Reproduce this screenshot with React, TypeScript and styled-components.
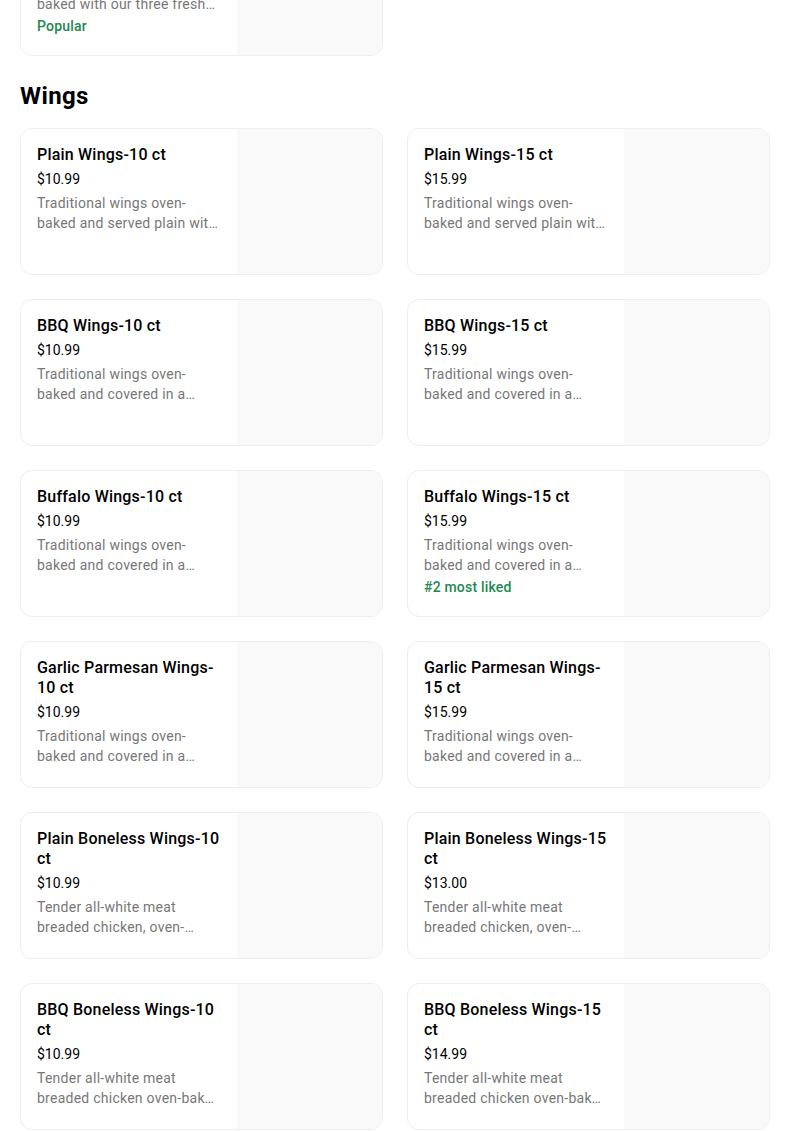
import React from "react";
import styled, { createGlobalStyle } from "styled-components";

interface MenuItem {
  name: string;
  price: string;
  description: string;
  tag?: string;
}

const GlobalStyle = createGlobalStyle`
  * {
    box-sizing: border-box;
  }
  body {
    margin: 0;
    background: #ffffff;
    color: #000000;
    font-family: Roboto, "Noto Sans", "Liberation Sans", sans-serif;
    -webkit-font-smoothing: antialiased;
  }
`;

const Page = styled.main`
  width: 750px;
  margin: -91px 0 0 20px;
`;

const Section = styled.section`
  display: flex;
  flex-direction: column;
`;

const SectionTitle = styled.h2`
  margin: 24px 0 16px;
  font-size: 24px;
  line-height: 32px;
  font-weight: 700;
  letter-spacing: 0.4px;
`;

const ItemGrid = styled.ul`
  list-style: none;
  margin: 0;
  padding: 0;
  display: grid;
  grid-template-columns: 1fr 1fr;
  gap: 24px;
`;

const Card = styled.li`
  display: flex;
  height: 147px;
  border: 1px solid #eeeeee;
  border-radius: 12px;
  overflow: hidden;
  background: #ffffff;
  cursor: pointer;
`;

const Info = styled.div`
  flex: 1;
  min-width: 0;
  padding: 16px 16px 15px;
  display: flex;
  flex-direction: column;
`;

const Name = styled.div`
  font-size: 16px;
  line-height: 20px;
  font-weight: 500;
  letter-spacing: 0.2px;
  color: #000000;
`;

const Price = styled.div`
  margin-top: 4px;
  font-size: 14px;
  line-height: 20px;
  color: #000000;
`;

const Description = styled.div`
  margin-top: 4px;
  font-size: 14px;
  line-height: 20px;
  letter-spacing: 0.25px;
  color: #777777;
  display: -webkit-box;
  -webkit-line-clamp: 2;
  -webkit-box-orient: vertical;
  overflow: hidden;
`;

const Tag = styled.div`
  margin-top: 2px;
  font-size: 14px;
  line-height: 20px;
  font-weight: 500;
  letter-spacing: 0.2px;
  color: #23884f;
`;

const Thumb = styled.div`
  flex: 0 0 145px;
  height: 145px;
  background: #f9f9f9;
`;

const sides: MenuItem[] = [
  {
    name: "Cheezy Bread",
    price: "$8.99",
    description:
      "Original crust dough oven-baked with our three fresh cheeses, garlic butter and Italian seasoning.",
    tag: "Popular",
  },
];

const wingsDesc = (rest: string) => `Traditional wings oven-baked and ${rest}`;

const wings: MenuItem[] = [
  { name: "Plain Wings-10 ct", price: "$10.99", description: wingsDesc("served plain with your choice of dipping sauce.") },
  { name: "Plain Wings-15 ct", price: "$15.99", description: wingsDesc("served plain with your choice of dipping sauce.") },
  { name: "BBQ Wings-10 ct", price: "$10.99", description: wingsDesc("covered in a sweet and smoky BBQ sauce.") },
  { name: "BBQ Wings-15 ct", price: "$15.99", description: wingsDesc("covered in a sweet and smoky BBQ sauce.") },
  { name: "Buffalo Wings-10 ct", price: "$10.99", description: wingsDesc("covered in a spicy buffalo sauce.") },
  {
    name: "Buffalo Wings-15 ct",
    price: "$15.99",
    description: wingsDesc("covered in a spicy buffalo sauce."),
    tag: "#2 most liked",
  },
  { name: "Garlic Parmesan Wings-10 ct", price: "$10.99", description: wingsDesc("covered in a garlic parmesan sauce.") },
  { name: "Garlic Parmesan Wings-15 ct", price: "$15.99", description: wingsDesc("covered in a garlic parmesan sauce.") },
  {
    name: "Plain Boneless Wings-10 ct",
    price: "$10.99",
    description: "Tender all-white meat breaded chicken, oven-baked and served plain.",
  },
  {
    name: "Plain Boneless Wings-15 ct",
    price: "$13.00",
    description: "Tender all-white meat breaded chicken, oven-baked and served plain.",
  },
  {
    name: "BBQ Boneless Wings-10 ct",
    price: "$10.99",
    description: "Tender all-white meat breaded chicken oven-baked and covered in BBQ sauce.",
  },
  {
    name: "BBQ Boneless Wings-15 ct",
    price: "$14.99",
    description: "Tender all-white meat breaded chicken oven-baked and covered in BBQ sauce.",
  },
];

function ItemCard({ item }: { item: MenuItem }) {
  return (
    <Card>
      <Info>
        <Name>{item.name}</Name>
        <Price>{item.price}</Price>
        <Description>{item.description}</Description>
        {item.tag && <Tag>{item.tag}</Tag>}
      </Info>
      <Thumb />
    </Card>
  );
}

export default function App() {
  return (
    <>
      <GlobalStyle />
      <Page>
        <Section>
          <ItemGrid>
            {sides.map((item) => (
              <ItemCard key={item.name} item={item} />
            ))}
          </ItemGrid>
        </Section>
        <Section>
          <SectionTitle>Wings</SectionTitle>
          <ItemGrid>
            {wings.map((item) => (
              <ItemCard key={item.name} item={item} />
            ))}
          </ItemGrid>
        </Section>
      </Page>
    </>
  );
}
